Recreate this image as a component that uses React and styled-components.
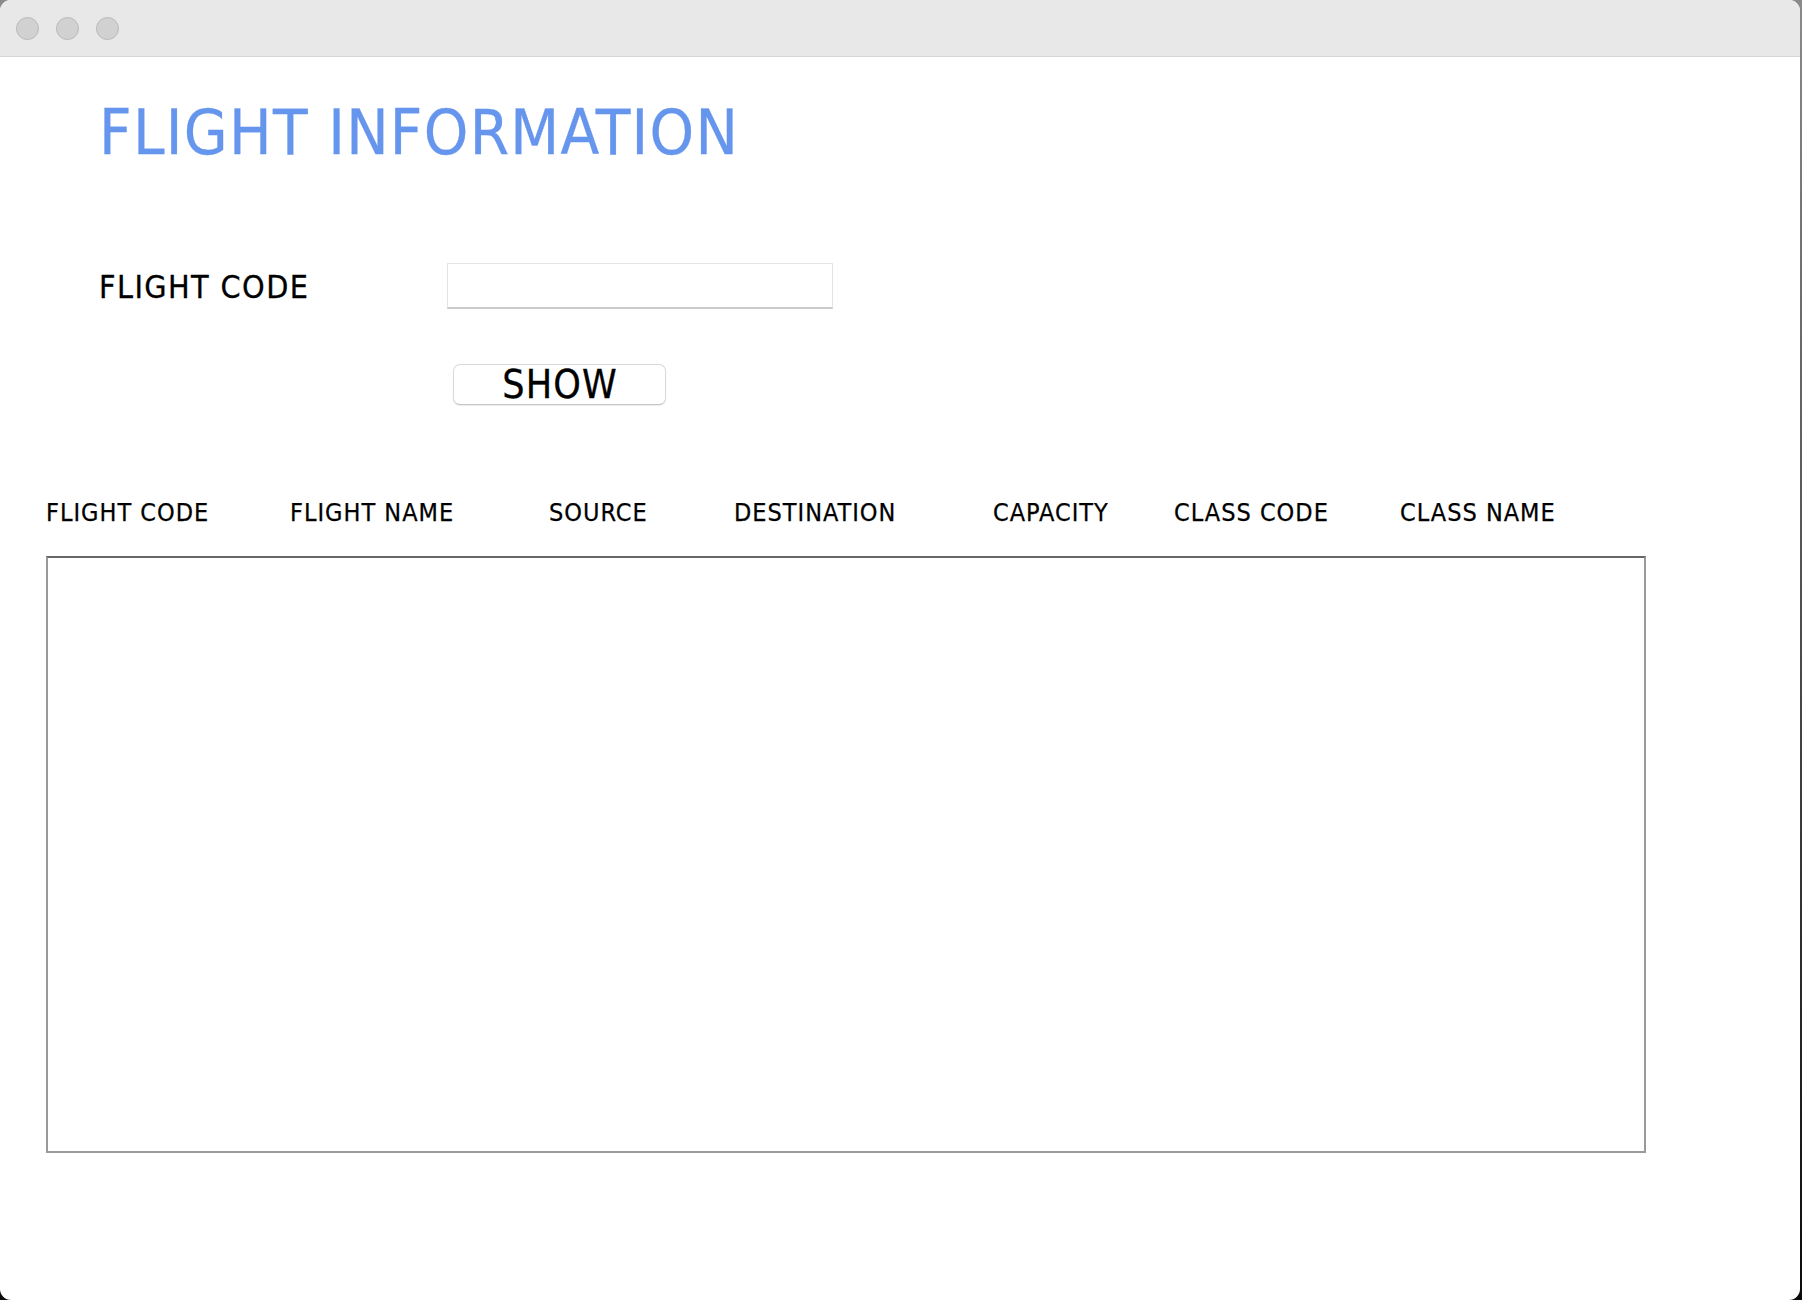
import React from "react";
import styled, { createGlobalStyle } from "styled-components";

const Global = createGlobalStyle`
  html, body { margin: 0; padding: 0; }
  body {
    width: 1802px;
    height: 1300px;
    overflow: hidden;
    background: linear-gradient(180deg, #8c8a88 0%, #5a5856 40%, #0a0a0a 100%);
    font-family: "DejaVu Sans Condensed", "DejaVu Sans", sans-serif;
  }
`;

const Window = styled.div`
  width: 1800px;
  height: 1300px;
  background: #ffffff;
  border-radius: 11px;
  overflow: hidden;
  display: flex;
  flex-direction: column;
`;

const TitleBar = styled.div`
  height: 56px;
  flex: none;
  background: #e8e8e8;
  border-bottom: 1px solid #d6d6d6;
  display: flex;
  align-items: center;
  gap: 17px;
  padding-left: 16px;
`;

const Light = styled.span`
  width: 21px;
  height: 21px;
  border-radius: 50%;
  background: #d1d1d1;
  border: 1px solid #b9b9b9;
`;

const Main = styled.div`
  display: flex;
  flex-direction: column;
  align-items: flex-start;
`;

const Title = styled.h1`
  margin: 44px 0 0 99px;
  font-size: 63px;
  line-height: 1;
  font-weight: normal;
  letter-spacing: 1.3px;
  color: #6595ec;
  -webkit-text-stroke: 0.3px #6595ec;
  white-space: nowrap;
`;

const FormRow = styled.div`
  display: flex;
  align-items: center;
  margin: 99px 0 0 99px;
`;

const Label = styled.label`
  width: 348px;
  font-size: 32px;
  line-height: 1;
  letter-spacing: 1.4px;
  color: #000;
  -webkit-text-stroke: 0.3px #000;
  margin-top: 2px;
`;

const Input = styled.input`
  box-sizing: border-box;
  width: 386px;
  height: 46px;
  border: 1px solid #e4e4e4;
  border-bottom: 2px solid #cbcbcb;
  background: #fff;
  outline: none;
  font-size: 24px;
  font-family: inherit;
  padding: 0 8px;
`;

const Button = styled.button`
  box-sizing: border-box;
  margin: 55px 0 0 453px;
  width: 213px;
  height: 41px;
  border: 1px solid #d9d9d9;
  border-bottom-color: #c6c6c6;
  border-radius: 7px;
  background: #ffffff;
  box-shadow: 0 1px 1px rgba(0, 0, 0, 0.08);
  display: flex;
  align-items: center;
  justify-content: center;
  padding: 0 0 0 1px;
  font-family: inherit;
  font-size: 39px;
  line-height: 1;
  letter-spacing: 1.1px;
  color: #000;
  -webkit-text-stroke: 0.3px #000;
`;

const HeaderRow = styled.div`
  display: grid;
  grid-template-columns: 244px 259px 185px 259px 181px 226px auto;
  margin: 95px 0 0 46px;
  font-size: 25px;
  line-height: 1;
  letter-spacing: 1px;
  color: #000;
  -webkit-text-stroke: 0.25px #000;
  white-space: nowrap;
`;

const Header = styled.span``;

const TableBox = styled.div`
  box-sizing: border-box;
  margin: 31px 0 0 46px;
  width: 1600px;
  height: 597px;
  border: 2px solid #9a9a9a;
  border-top-color: #676767;
  background: #fff;
`;

const headers = [
  "FLIGHT CODE",
  "FLIGHT NAME",
  "SOURCE",
  "DESTINATION",
  "CAPACITY",
  "CLASS CODE",
  "CLASS NAME",
];

export default function App() {
  return (
    <>
      <Global />
      <Window>
        <TitleBar>
          <Light />
          <Light />
          <Light />
        </TitleBar>
        <Main>
          <Title>FLIGHT INFORMATION</Title>
          <FormRow>
            <Label>FLIGHT CODE</Label>
            <Input type="text" />
          </FormRow>
          <Button>SHOW</Button>
          <HeaderRow>
            {headers.map((h) => (
              <Header key={h}>{h}</Header>
            ))}
          </HeaderRow>
          <TableBox />
        </Main>
      </Window>
    </>
  );
}
